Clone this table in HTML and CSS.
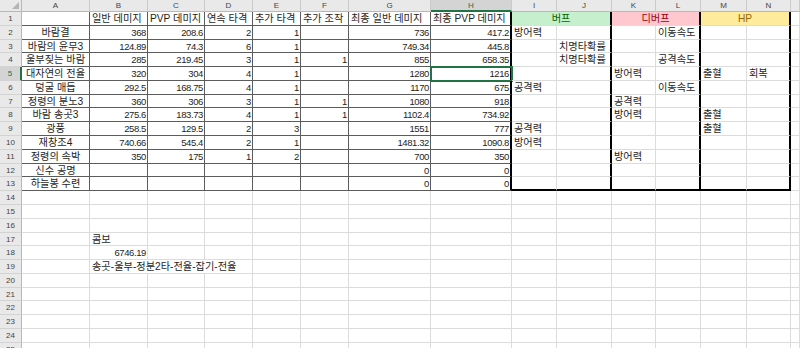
FILE: index.html
```html
<!DOCTYPE html>
<html lang="ko">
<head>
<meta charset="utf-8">
<title>Sheet</title>
<link rel="stylesheet" href="styles.css">
</head>
<body>
<div class="sheet">
  <div class="corner"></div><div class="ch">A</div><div class="ch">B</div><div class="ch">C</div><div class="ch">D</div><div class="ch">E</div><div class="ch">F</div><div class="ch">G</div><div class="ch sel">H</div><div class="ch">I</div><div class="ch">J</div><div class="ch">K</div><div class="ch">L</div><div class="ch">M</div><div class="ch">N</div><div class="ch"></div>

  <div class="rh">1</div><div class="c b"></div><div class="c b">일반 데미지</div><div class="c b">PVP 데미지</div><div class="c b">연속 타격</div><div class="c b">추가 타격</div><div class="c b">추가 조작</div><div class="c b">최종 일반 데미지</div><div class="c b tr">최종 PVP 데미지</div><div class="c m buf tr">버프</div><div class="c m deb tr">디버프</div><div class="c m hp tr">HP</div><div class="c"></div>

  <div class="rh">2</div><div class="c b ctr">바람결</div><div class="c b n">368</div><div class="c b n">208.6</div><div class="c b n">2</div><div class="c b n">1</div><div class="c b n"></div><div class="c b n">736</div><div class="c b n tr">417.2</div><div class="c">방어력</div><div class="c tr"></div><div class="c"></div><div class="c tr">이동속도</div><div class="c"></div><div class="c tr"></div><div class="c"></div>

  <div class="rh">3</div><div class="c b ctr">바람의 윤무3</div><div class="c b n">124.89</div><div class="c b n">74.3</div><div class="c b n">6</div><div class="c b n">1</div><div class="c b n"></div><div class="c b n">749.34</div><div class="c b n tr">445.8</div><div class="c"></div><div class="c tr">치명타확률</div><div class="c"></div><div class="c tr"></div><div class="c"></div><div class="c tr"></div><div class="c"></div>

  <div class="rh">4</div><div class="c b ctr">울부짖는 바람</div><div class="c b n">285</div><div class="c b n">219.45</div><div class="c b n">3</div><div class="c b n">1</div><div class="c b n">1</div><div class="c b n">855</div><div class="c b n tr">658.35</div><div class="c"></div><div class="c tr">치명타확률</div><div class="c"></div><div class="c tr">공격속도</div><div class="c"></div><div class="c tr"></div><div class="c"></div>

  <div class="rh sel">5</div><div class="c b ctr">대자연의 전율</div><div class="c b n">320</div><div class="c b n">304</div><div class="c b n">4</div><div class="c b n">1</div><div class="c b n"></div><div class="c b n">1280</div><div class="c b n tr active">1216</div><div class="c"></div><div class="c tr"></div><div class="c">방어력</div><div class="c tr"></div><div class="c">출혈</div><div class="c tr">회복</div><div class="c"></div>

  <div class="rh">6</div><div class="c b ctr">덩굴 매듭</div><div class="c b n">292.5</div><div class="c b n">168.75</div><div class="c b n">4</div><div class="c b n">1</div><div class="c b n"></div><div class="c b n">1170</div><div class="c b n tr">675</div><div class="c">공격력</div><div class="c tr"></div><div class="c"></div><div class="c tr">이동속도</div><div class="c"></div><div class="c tr"></div><div class="c"></div>

  <div class="rh">7</div><div class="c b ctr">정령의 분노3</div><div class="c b n">360</div><div class="c b n">306</div><div class="c b n">3</div><div class="c b n">1</div><div class="c b n">1</div><div class="c b n">1080</div><div class="c b n tr">918</div><div class="c"></div><div class="c tr"></div><div class="c">공격력</div><div class="c tr"></div><div class="c"></div><div class="c tr"></div><div class="c"></div>

  <div class="rh">8</div><div class="c b ctr">바람 송곳3</div><div class="c b n">275.6</div><div class="c b n">183.73</div><div class="c b n">4</div><div class="c b n">1</div><div class="c b n">1</div><div class="c b n">1102.4</div><div class="c b n tr">734.92</div><div class="c"></div><div class="c tr"></div><div class="c">방어력</div><div class="c tr"></div><div class="c">출혈</div><div class="c tr"></div><div class="c"></div>

  <div class="rh">9</div><div class="c b ctr">광풍</div><div class="c b n">258.5</div><div class="c b n">129.5</div><div class="c b n">2</div><div class="c b n">3</div><div class="c b n"></div><div class="c b n">1551</div><div class="c b n tr">777</div><div class="c">공격력</div><div class="c tr"></div><div class="c"></div><div class="c tr"></div><div class="c">출혈</div><div class="c tr"></div><div class="c"></div>

  <div class="rh">10</div><div class="c b ctr">재창조4</div><div class="c b n">740.66</div><div class="c b n">545.4</div><div class="c b n">2</div><div class="c b n">1</div><div class="c b n"></div><div class="c b n">1481.32</div><div class="c b n tr">1090.8</div><div class="c">방어력</div><div class="c tr"></div><div class="c"></div><div class="c tr"></div><div class="c"></div><div class="c tr"></div><div class="c"></div>

  <div class="rh">11</div><div class="c b ctr">정령의 속박</div><div class="c b n">350</div><div class="c b n">175</div><div class="c b n">1</div><div class="c b n">2</div><div class="c b n"></div><div class="c b n">700</div><div class="c b n tr">350</div><div class="c"></div><div class="c tr"></div><div class="c">방어력</div><div class="c tr"></div><div class="c"></div><div class="c tr"></div><div class="c"></div>

  <div class="rh">12</div><div class="c b ctr">신수 공명</div><div class="c b n"></div><div class="c b n"></div><div class="c b n"></div><div class="c b n"></div><div class="c b n"></div><div class="c b n">0</div><div class="c b n tr">0</div><div class="c"></div><div class="c tr"></div><div class="c"></div><div class="c tr"></div><div class="c"></div><div class="c tr"></div><div class="c"></div>

  <div class="rh">13</div><div class="c b ctr">하늘봉 수련</div><div class="c b n"></div><div class="c b n"></div><div class="c b n"></div><div class="c b n"></div><div class="c b n"></div><div class="c b n">0</div><div class="c b n tr">0</div><div class="c tb"></div><div class="c tb tr"></div><div class="c tb"></div><div class="c tb tr"></div><div class="c tb"></div><div class="c tb tr"></div><div class="c"></div>

  <div class="rh">14</div><div class="c"></div><div class="c"></div><div class="c"></div><div class="c"></div><div class="c"></div><div class="c"></div><div class="c"></div><div class="c"></div><div class="c"></div><div class="c"></div><div class="c"></div><div class="c"></div><div class="c"></div><div class="c"></div><div class="c"></div>

  <div class="rh">15</div><div class="c"></div><div class="c"></div><div class="c"></div><div class="c"></div><div class="c"></div><div class="c"></div><div class="c"></div><div class="c"></div><div class="c"></div><div class="c"></div><div class="c"></div><div class="c"></div><div class="c"></div><div class="c"></div><div class="c"></div>

  <div class="rh">16</div><div class="c"></div><div class="c"></div><div class="c"></div><div class="c"></div><div class="c"></div><div class="c"></div><div class="c"></div><div class="c"></div><div class="c"></div><div class="c"></div><div class="c"></div><div class="c"></div><div class="c"></div><div class="c"></div><div class="c"></div>

  <div class="rh">17</div><div class="c"></div><div class="c">콤보</div><div class="c"></div><div class="c"></div><div class="c"></div><div class="c"></div><div class="c"></div><div class="c"></div><div class="c"></div><div class="c"></div><div class="c"></div><div class="c"></div><div class="c"></div><div class="c"></div><div class="c"></div>

  <div class="rh">18</div><div class="c"></div><div class="c n">6746.19</div><div class="c"></div><div class="c"></div><div class="c"></div><div class="c"></div><div class="c"></div><div class="c"></div><div class="c"></div><div class="c"></div><div class="c"></div><div class="c"></div><div class="c"></div><div class="c"></div><div class="c"></div>

  <div class="rh">19</div><div class="c"></div><div class="c span3">송곳-울부-정분2타-전율-잡기-전율</div><div class="c"></div><div class="c"></div><div class="c"></div><div class="c"></div><div class="c"></div><div class="c"></div><div class="c"></div><div class="c"></div><div class="c"></div><div class="c"></div><div class="c"></div>

  <div class="rh">20</div><div class="c"></div><div class="c"></div><div class="c"></div><div class="c"></div><div class="c"></div><div class="c"></div><div class="c"></div><div class="c"></div><div class="c"></div><div class="c"></div><div class="c"></div><div class="c"></div><div class="c"></div><div class="c"></div><div class="c"></div>

  <div class="rh">21</div><div class="c"></div><div class="c"></div><div class="c"></div><div class="c"></div><div class="c"></div><div class="c"></div><div class="c"></div><div class="c"></div><div class="c"></div><div class="c"></div><div class="c"></div><div class="c"></div><div class="c"></div><div class="c"></div><div class="c"></div>

  <div class="rh">22</div><div class="c"></div><div class="c"></div><div class="c"></div><div class="c"></div><div class="c"></div><div class="c"></div><div class="c"></div><div class="c"></div><div class="c"></div><div class="c"></div><div class="c"></div><div class="c"></div><div class="c"></div><div class="c"></div><div class="c"></div>

  <div class="rh">23</div><div class="c"></div><div class="c"></div><div class="c"></div><div class="c"></div><div class="c"></div><div class="c"></div><div class="c"></div><div class="c"></div><div class="c"></div><div class="c"></div><div class="c"></div><div class="c"></div><div class="c"></div><div class="c"></div><div class="c"></div>

  <div class="rh">24</div><div class="c"></div><div class="c"></div><div class="c"></div><div class="c"></div><div class="c"></div><div class="c"></div><div class="c"></div><div class="c"></div><div class="c"></div><div class="c"></div><div class="c"></div><div class="c"></div><div class="c"></div><div class="c"></div><div class="c"></div>

  <div class="rh">25</div><div class="c"></div><div class="c"></div><div class="c"></div><div class="c"></div><div class="c"></div><div class="c"></div><div class="c"></div><div class="c"></div><div class="c"></div><div class="c"></div><div class="c"></div><div class="c"></div><div class="c"></div><div class="c"></div><div class="c"></div>
</div>
</body>
</html>
```

FILE: styles.css
```css
* {
  box-sizing: border-box;
  margin: 0;
  padding: 0;
}

html,
body {
  width: 800px;
  height: 348px;
  overflow: hidden;
  background: #ffffff;
}

.sheet {
  display: grid;
  grid-template-columns: 22px 68px 58px 57px 48px 48px 48px 82px 81px 45px 55px 44px 45px 46px 44px 9px;
  grid-template-rows: 12px;
  grid-auto-rows: 13.79px;
  font-family: "Liberation Sans", "Noto Sans CJK KR", sans-serif;
  font-size: 10.2px;
  color: #1e1e1e;
}

.corner {
  background: #e9e9e9;
  border-right: 1px solid #b8b8b8;
  border-bottom: 1px solid #b8b8b8;
  display: flex;
  align-items: flex-end;
  justify-content: flex-end;
  padding: 0 2px 2px 0;
}

.corner::after {
  content: "";
  border-left: 7px solid transparent;
  border-bottom: 7px solid #b4b4b4;
}

.ch {
  background: #e9e9e9;
  border-right: 1px solid #cacaca;
  border-bottom: 1px solid #b8b8b8;
  font-family: "Liberation Sans", sans-serif;
  font-size: 8px;
  color: #444444;
  text-align: center;
  line-height: 11px;
}

.ch.sel {
  background: #d4d4d4;
  color: #217346;
  border-bottom: 2px solid #217346;
}

.rh {
  background: #e9e9e9;
  border-right: 1px solid #b8b8b8;
  border-bottom: 1px solid #d3d3d3;
  font-family: "Liberation Sans", sans-serif;
  font-size: 8px;
  color: #444444;
  text-align: center;
  line-height: 13px;
}

.rh.sel {
  background: #d4d4d4;
  color: #217346;
  border-right: 2px solid #217346;
}

.c {
  border-right: 1px solid #dcdcdc;
  border-bottom: 1px solid #dcdcdc;
  padding: 0 2px;
  white-space: nowrap;
  overflow: hidden;
  line-height: 13px;
}

.b {
  border-color: #5c5c5c;
}

.n {
  text-align: right;
  padding-right: 1px;
  font-family: "Liberation Sans", sans-serif;
  font-size: 9.5px;
  letter-spacing: -0.4px;
}

.ctr {
  text-align: center;
}

.tr {
  border-right: 2px solid #000000;
}

.tb {
  border-bottom: 2px solid #000000;
}

.m {
  grid-column: span 2;
  text-align: center;
}

.span3 {
  grid-column: span 3;
}

.buf {
  background: #c6efce;
  color: #006100;
}

.deb {
  background: #ffc7ce;
  color: #9c0006;
}

.hp {
  background: #ffeb9c;
  color: #9c6500;
}

.active {
  outline: 2px solid #217346;
  outline-offset: -1px;
}
```
